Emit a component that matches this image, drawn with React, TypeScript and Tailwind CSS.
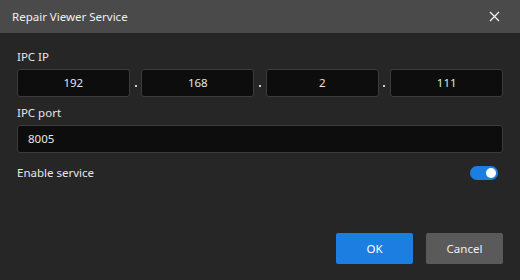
import React, { useState } from 'react';

const font = { fontFamily: '"Noto Sans", "Open Sans", sans-serif' };

function IpBox({ value, className = '' }: { value: string; className?: string }) {
  return (
    <div className="flex h-[28px] w-[113px] items-center justify-center rounded-[3px] border border-[#3c3c3c] bg-[#0d0d0d]">
      <span className={`text-[11.5px] ${className || 'text-[#e6e6e6]'}`}>{value}</span>
    </div>
  );
}

function Dot() {
  return (
    <div className="flex w-[12px] items-center justify-center pt-[6px]">
      <span className="h-[2px] w-[2px] bg-[#d0d0d0]" />
    </div>
  );
}

export default function App() {
  const [enabled, setEnabled] = useState(true);

  return (
    <div className="flex h-[280px] w-[520px] flex-col bg-[#262626] text-[#e6e6e6]" style={font}>
      <div className="flex h-[33px] shrink-0 items-center justify-between bg-[#4a4a4a] pl-[12px] pr-[20px]">
        <span className="text-[11.5px] text-[#f0f0f0]">Repair Viewer Service</span>
        <svg width="11" height="11" viewBox="0 0 11 11" className="text-[#f2f2f2]">
          <path d="M1 1 L10 10 M10 1 L1 10" stroke="currentColor" strokeWidth="1.3" />
        </svg>
      </div>

      <div className="flex flex-1 flex-col px-[17px] pt-[16px]">
        <label className="text-[11.5px] leading-[16px]">IPC IP</label>
        <div className="mt-[4px] flex">
          <IpBox value="192" />
          <Dot />
          <IpBox value="168" />
          <Dot />
          <IpBox value="2" />
          <Dot />
          <IpBox value="111" className="text-[#cdf5cd]" />
        </div>

        <label className="mt-[8px] text-[11.5px] leading-[16px]">IPC port</label>
        <div className="mt-[4px] flex h-[28px] items-center rounded-[3px] border border-[#3c3c3c] bg-[#0d0d0d] px-[10px]">
          <span className="text-[11.5px]">8005</span>
        </div>

        <div className="mt-[12px] flex items-center justify-between pr-[5px]">
          <span className="text-[11.5px] leading-[16px]">Enable service</span>
          <button
            onClick={() => setEnabled(!enabled)}
            className={`flex h-[14px] w-[28px] items-center rounded-full px-[2px] ${enabled ? 'justify-end bg-[#1b7ee0]' : 'justify-start bg-[#5a5a5a]'}`}
          >
            <span className="h-[10px] w-[10px] rounded-full bg-white" />
          </button>
        </div>

        <div className="mt-auto mb-[16px] flex justify-end gap-[13px]">
          <button className="h-[31px] w-[77px] rounded-[2px] bg-[#1b7ee0] text-[11.5px] text-white">OK</button>
          <button className="h-[31px] w-[77px] rounded-[2px] bg-[#5a5a5a] text-[11.5px] text-[#f0f0f0]">Cancel</button>
        </div>
      </div>
    </div>
  );
}
